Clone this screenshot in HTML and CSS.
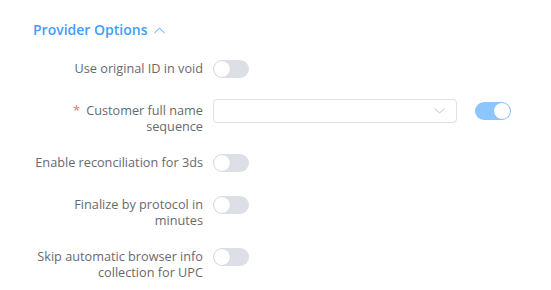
FILE: index.html
```html
<!DOCTYPE html>
<html lang="en">
<head>
  <meta charset="UTF-8" />
  <title>Provider Options</title>
  <link rel="stylesheet" href="styles.css">
</head>
<body>

  <div class="section">
    <h3 class="section-title">
      Provider Options
      <svg class="chevron" width="11" height="7" viewBox="0 0 11 7">
        <path d="M0.5 6 L5.5 1.2 L10.5 6" fill="none" stroke="#409eff" stroke-width="1" />
      </svg>
    </h3>

    <div class="form">
      <div class="form-item">
        <label class="form-label">Use original ID in void</label>
        <div class="form-content">
          <span class="switch"><span class="knob"></span></span>
        </div>
      </div>

      <div class="form-item">
        <label class="form-label"><span class="required">*</span> Customer full name sequence</label>
        <div class="form-content">
          <div class="select">
            <svg class="select-arrow" width="11" height="6" viewBox="0 0 11 6">
              <path d="M0.5 0.5 L5.5 5 L10.5 0.5" fill="none" stroke="#c0c4cc" stroke-width="1" />
            </svg>
          </div>
          <span class="switch is-on"><span class="knob"></span></span>
        </div>
      </div>

      <div class="form-item">
        <label class="form-label">Enable reconciliation for 3ds</label>
        <div class="form-content">
          <span class="switch"><span class="knob"></span></span>
        </div>
      </div>

      <div class="form-item">
        <label class="form-label">Finalize by protocol in minutes</label>
        <div class="form-content">
          <span class="switch"><span class="knob"></span></span>
        </div>
      </div>

      <div class="form-item">
        <label class="form-label">Skip automatic browser info collection for UPC</label>
        <div class="form-content">
          <span class="switch"><span class="knob"></span></span>
        </div>
      </div>
    </div>
  </div>

</body>
</html>
```

FILE: styles.css
```css
body {
  margin: 0;
  font-family: "Open Sans", Arial, sans-serif;
  background: #fff;
  color: #606266;
}

.section {
  padding: 20px 0 0 33px;
}

.section-title {
  margin: 0;
  font-size: 14px;
  font-weight: 600;
  line-height: 20px;
  color: #409eff;
  display: flex;
  align-items: center;
  gap: 7px;
}

.chevron {
  margin-top: 1px;
}

.form {
  margin-top: 16px;
}

/* rows: content area is 26px tall, label lines are 16px */
.form-item {
  display: flex;
  align-items: flex-start;
  margin-bottom: 16px;
}

.form-label {
  width: 170px;
  padding: 4px 10px 0 0;
  text-align: right;
  font-size: 12.7px;
  line-height: 16px;
  color: #686a6f;
}

.required {
  color: #f56c6c;
  margin-right: 3px;
}

.form-content {
  height: 26px;
  display: flex;
  align-items: center;
}

.select {
  width: 244px;
  height: 24px;
  box-sizing: border-box;
  border: 1px solid #dcdfe6;
  border-radius: 4px;
  display: flex;
  align-items: center;
  justify-content: flex-end;
  padding-right: 11px;
  margin-right: 18px;
}

.switch {
  position: relative;
  display: inline-block;
  width: 36px;
  height: 18px;
  border-radius: 9px;
  background: #dcdfe6;
}

.switch .knob {
  position: absolute;
  top: 1px;
  left: 1px;
  width: 16px;
  height: 16px;
  border-radius: 50%;
  background: #fff;
  box-shadow: 0 0 0 0.5px rgba(0, 0, 0, 0.08);
}

.switch.is-on {
  background: #8cc5ff;
}

.switch.is-on .knob {
  left: 19px;
}
```
